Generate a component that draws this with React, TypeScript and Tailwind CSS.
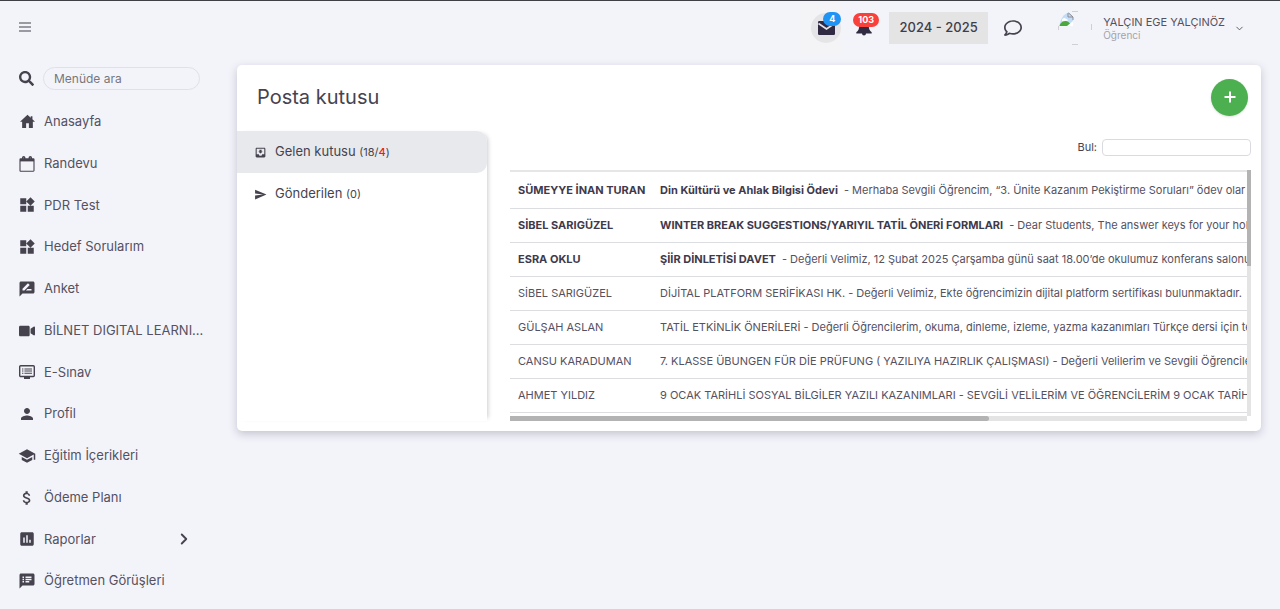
import React from "react";
import type { IconType } from "react-icons";
import {
  MdWidgets,
  MdRateReview,
  MdPerson,
  MdSchool,
  MdAttachMoney,
  MdAssessment,
  MdSpeakerNotes,
  MdSend,
  MdMoveToInbox,
} from "react-icons/md";
import { FaSearch, FaRegComment, FaVideo } from "react-icons/fa";
import { ChevronDown, ChevronRight } from "lucide-react";

type IconProps = { className?: string };

function MenuIcon({ className }: IconProps) {
  return (
    <svg viewBox="0 0 12 10" className={className} fill="currentColor" aria-hidden="true">
      <path d="M0 0h12v2H0zM0 4h12v2H0zM0 8h12v2H0z" />
    </svg>
  );
}

function PlusIcon({ className }: IconProps) {
  return (
    <svg viewBox="0 0 12 12" className={className} fill="currentColor" aria-hidden="true">
      <path d="M5 0.500h2V5h4.500v2H7v4.500H5V7H0.500V5H5z" />
    </svg>
  );
}

function HomeIcon({ className }: IconProps) {
  return (
    <svg viewBox="0 0 14 14" className={className} fill="currentColor" aria-hidden="true">
      <path d="M7 .6 0 7.200h2V13h3.700V8.600h2.600V13H12V7.200h2L11.600 4.900V2H10v1.400z" />
    </svg>
  );
}

function CalendarIcon({ className }: IconProps) {
  return (
    <svg viewBox="0 0 16 16" className={className} fill="none" stroke="currentColor" aria-hidden="true">
      <rect x="1" y="2.800" width="14" height="12.400" rx=".6" strokeWidth="1.1" />
      <path d="M1 4.200h14" strokeWidth="2.4" />
      <path d="M3.700 4V1.800a1 1 0 0 1 2 0V4M10.300 4V1.800a1 1 0 0 1 2 0V4" strokeWidth="1.5" />
    </svg>
  );
}

function ScreenListIcon({ className }: IconProps) {
  return (
    <svg viewBox="0 0 18 16" className={className} fill="currentColor" aria-hidden="true">
      <rect x="1.7" y="1.7" width="14.6" height="10.8" rx="1" fill="none" stroke="currentColor" strokeWidth="1.4" />
      <path d="M6 13h6v2H6zM4 4.400h1.400v1H4zM6.400 4.400H14v1H6.400zM4 6.600h1.400v1H4zM6.400 6.600H14v1H6.400zM4 8.800h1.400v1H4zM6.400 8.800H14v1H6.400z" />
    </svg>
  );
}

function EnvelopeIcon({ className }: IconProps) {
  return (
    <svg viewBox="0 0 17 14" className={className} aria-hidden="true">
      <rect width="17" height="14" rx="1.2" fill="currentColor" />
      <path d="m.5 2.500 8 5.500 8-5.500" fill="none" stroke="#e5e5e7" strokeWidth="1.7" />
    </svg>
  );
}

function BellIcon({ className }: IconProps) {
  return (
    <svg viewBox="0 0 16 18" className={className} fill="currentColor" aria-hidden="true">
      <path d="M8 0C4.800 0 3.300 2.600 3.300 5.500 3.300 9.500 2.500 12 .3 13.200v1.300h15.400v-1.300c-2.200-1.200-3-3.700-3-7.700C12.700 2.600 11.200 0 8 0zM6 14.500a2 2 0 0 0 4 0z" />
    </svg>
  );
}

function MissingAvatar() {
  return (
    <svg viewBox="0 0 36 34" className="h-[34px] w-9" fill="none" role="img" aria-label="Profil resmi">
      <path d="M.5 19v-4M14 .5h6M14 33.500h6M33.500 19v-6" stroke="#cfcfd4" />
      <path d="M1.500 15C2 8 6 2.500 11 1.500l4 4V15z" fill="#c3dcf7" />
      <path d="M4 8.500c1-2 3-2 4-.7 1.300 0 2 1 1.800 2L4 10z" fill="#fff" />
      <path d="M1.500 15c1-4 4-5 6.500-5 2.500.3 4 2.500 7 5z" fill="#4ba83f" />
      <path d="m9 15 6-5v5z" fill="#fff" />
      <path d="M10 2v4h5M10.500 2l4.500 4v3" stroke="#8d8d92" />
    </svg>
  );
}

type MenuItem = {
  label: string;
  icon: IconType | React.FC<IconProps>;
  iconSize?: string;
  expandable?: boolean;
};

const menu: MenuItem[] = [
  { label: "Anasayfa", icon: HomeIcon, iconSize: "size-[15px]" },
  { label: "Randevu", icon: CalendarIcon, iconSize: "size-4" },
  { label: "PDR Test", icon: MdWidgets },
  { label: "Hedef Sorularım", icon: MdWidgets },
  { label: "Anket", icon: MdRateReview },
  { label: "BİLNET DIGITAL LEARNI...", icon: FaVideo, iconSize: "size-4" },
  { label: "E-Sınav", icon: ScreenListIcon },
  { label: "Profil", icon: MdPerson },
  { label: "Eğitim İçerikleri", icon: MdSchool },
  { label: "Ödeme Planı", icon: MdAttachMoney },
  { label: "Raporlar", icon: MdAssessment, expandable: true },
  { label: "Öğretmen Görüşleri", icon: MdSpeakerNotes },
];

type Mail = { from: string; subject: string; preview: string; unread?: boolean };

const mails: Mail[] = [
  {
    from: "SÜMEYYE İNAN TURAN",
    subject: "Din Kültürü ve Ahlak Bilgisi Ödevi",
    preview: "Merhaba Sevgili Öğrencim, “3. Ünite Kazanım Pekiştirme Soruları” ödev olar",
    unread: true,
  },
  {
    from: "SİBEL SARIGÜZEL",
    subject: "WINTER BREAK SUGGESTIONS/YARIYIL TATİL ÖNERİ FORMLARI",
    preview: "Dear Students, The answer keys for your holid",
    unread: true,
  },
  {
    from: "ESRA OKLU",
    subject: "ŞİİR DİNLETİSİ DAVET",
    preview: "Değerli Velimiz, 12 Şubat 2025 Çarşamba günü saat 18.00’de okulumuz konferans salonun",
    unread: true,
  },
  {
    from: "SİBEL SARIGÜZEL",
    subject: "DİJİTAL PLATFORM SERİFİKASI HK.",
    preview: "Değerli Velimiz, Ekte öğrencimizin dijital platform sertifikası bulunmaktadır.",
  },
  {
    from: "GÜLŞAH ASLAN",
    subject: "TATİL ETKİNLİK ÖNERİLERİ",
    preview: "Değerli Öğrencilerim, okuma, dinleme, izleme, yazma kazanımları Türkçe dersi için tem",
  },
  {
    from: "CANSU KARADUMAN",
    subject: "7. KLASSE ÜBUNGEN FÜR DİE PRÜFUNG ( YAZILIYA HAZIRLIK ÇALIŞMASI)",
    preview: "Değerli Velilerim ve Sevgili Öğrenciler",
  },
  {
    from: "AHMET YILDIZ",
    subject: "9 OCAK TARİHLİ SOSYAL BİLGİLER YAZILI KAZANIMLARI",
    preview: "SEVGİLİ VELİLERİM VE ÖĞRENCİLERİM 9 OCAK TARİHİN",
  },
];

function Sidebar() {
  return (
    <aside className="flex min-h-screen w-[237px] shrink-0 flex-col pb-2">
      <div className="flex h-[52px] items-center pl-[19px]">
        <button type="button" aria-label="Menü" className="text-[#9a9aa3]">
          <MenuIcon className="h-[10px] w-3" />
        </button>
      </div>
      <div className="mt-[2px] flex h-[46px] items-center gap-[9px] pl-[19px]">
        <FaSearch className="size-[15px]" />
        <input
          type="search"
          aria-label="Menüde ara"
          placeholder="Menüde ara"
          className="h-[23px] w-[157px] rounded-full border border-[#dfe1e8] bg-transparent px-[10px] text-xs outline-none placeholder:text-[#77777c]"
        />
      </div>
      <nav className="flex flex-1 flex-col">
        {menu.map(({ label, icon: Icon, iconSize, expandable }) => (
          <a
            key={label}
            href="#"
            className="flex min-h-9 flex-1 items-center gap-2 pr-7 pl-[18px] text-[13px] whitespace-nowrap text-[#55515f]"
          >
            <span className="flex w-[18px] shrink-0 justify-center text-[#46434f]">
              <Icon className={iconSize ?? "size-[18px]"} />
            </span>
            <span className="flex-1">{label}</span>
            {expandable && <ChevronRight className="mr-4 size-[18px] text-[#46434f]" strokeWidth={2.5} />}
          </a>
        ))}
      </nav>
    </aside>
  );
}

function Header() {
  return (
    <header className="flex h-[54px] items-center justify-end pr-[35px]">
      <div className="flex h-full w-[42px] items-center justify-end bg-[#f4f4f7]">
        <button
          type="button"
          aria-label="Mesajlar, 4 yeni"
          className="relative flex size-[30px] items-center justify-center rounded-full bg-[#e5e5e7] text-[#312a43]"
        >
          <EnvelopeIcon className="h-[14px] w-[17px]" />
          <span className="absolute -top-px left-3 flex h-[14px] w-[18px] items-center justify-center rounded-full bg-[#2094f5] text-[9px] font-bold text-white">
            4
          </span>
        </button>
      </div>
      <button
        type="button"
        aria-label="Bildirimler, 103 yeni"
        className="relative ml-3 flex size-[26px] items-center justify-center text-[#312a43]"
      >
        <BellIcon className="mr-1 h-[18px] w-4" />
        <span className="absolute -top-[2px] left-0 flex h-[14px] w-[26px] items-center justify-center rounded-full bg-[#f9403a] text-[9px] font-bold text-white">
          103
        </span>
      </button>
      <button
        type="button"
        className="ml-[10px] h-8 w-[99px] bg-[#e4e4e5] text-[13px] font-medium text-[#3f3d49]"
      >
        2024 - 2025
      </button>
      <button type="button" aria-label="Sohbet" className="ml-4 text-[#46434f]">
        <FaRegComment className="size-[18px]" />
      </button>
      <button type="button" className="ml-9 flex items-center text-left">
        <MissingAvatar />
        <span className="ml-[9px] flex flex-col">
          <span className="text-[11px] leading-[13px] text-[#55515f]">YALÇIN EGE YALÇINÖZ</span>
          <span className="text-[10px] leading-3 text-[#a3a3aa]">Öğrenci</span>
        </span>
        <ChevronDown className="ml-[9px] size-[11px] text-[#55515f]" />
      </button>
    </header>
  );
}

function MailRow({ mail }: { mail: Mail }) {
  return (
    <tr className="h-[34px] border-b border-[#dcdde1] first:h-9">
      <td className={mail.unread ? "min-w-[142px] pl-2 font-bold text-[#3f3a4b]" : "min-w-[142px] pl-2"}>
        {mail.from}
      </td>
      <td className="w-full pl-2">
        <span className={mail.unread ? "mr-[6px] font-bold text-[#3f3a4b]" : "mr-[3px]"}>{mail.subject}</span>
        <span>- {mail.preview}</span>
      </td>
    </tr>
  );
}

function Mailbox() {
  return (
    <main className="mr-[19px] rounded-[5px] bg-white pb-[10px] shadow-[0_3px_8px_rgba(50,50,80,0.25)]">
      <div className="flex h-[66px] items-center justify-between pr-[13px] pb-[2px] pl-5">
        <h1 className="text-xl text-[#46434f]">Posta kutusu</h1>
        <button
          type="button"
          aria-label="Yeni mesaj"
          className="flex size-[37px] items-center justify-center rounded-full bg-[#4caf50] text-white shadow"
        >
          <PlusIcon className="size-3" />
        </button>
      </div>
      <div className="flex">
        <div className="w-[250px] shrink-0 rounded-tr-[10px] shadow-[4px_0_4px_-3px_rgba(50,50,80,0.25)]">
          <a
            href="#"
            className="flex h-[42px] items-center gap-2 rounded-r-[10px] bg-[#e8e9ed] pl-[17px] text-[13px] text-[#46434f]"
          >
            <MdMoveToInbox className="size-[13px]" />
            <span>
              Gelen kutusu{" "}
              <span className="text-[11px]">
                (18/<span className="font-medium text-[#f01818]">4</span>)
              </span>
            </span>
          </a>
          <a href="#" className="flex h-[42px] items-center gap-2 pl-[17px] text-[13px] text-[#46434f]">
            <MdSend className="size-[13px]" />
            <span>
              Gönderilen <span className="text-[11px]">(0)</span>
            </span>
          </a>
        </div>
        <div className="min-w-0 flex-1 pr-[10px] pl-[23px]">
          <div className="flex h-[39px] items-center justify-end gap-[5px] pb-[6px] text-[11px]">
            <label htmlFor="find">Bul:</label>
            <input
              id="find"
              type="text"
              className="h-[17px] w-[149px] rounded border border-[#dadbe0] bg-white px-1 text-[11px] outline-none"
            />
          </div>
          <div className="flex">
            <div className="min-w-0 flex-1 overflow-hidden border-t-2 border-[#e6e6e8] pb-[3px]">
              <table className="w-full text-[11px] whitespace-nowrap text-[#55515f]">
                <tbody>
                  {mails.map((mail, index) => (
                    <MailRow key={index} mail={mail} />
                  ))}
                </tbody>
              </table>
            </div>
            <div className="w-1 bg-[#e4e4e4]">
              <div className="h-[39%] bg-[#b3b3b3]" />
            </div>
          </div>
          <div className="mr-1 h-[5px] bg-[#e4e4e4]">
            <div className="h-full w-[65%] rounded-r-sm bg-[#b3b3b3]" />
          </div>
        </div>
      </div>
    </main>
  );
}

export default function App() {
  return (
    <div className="flex min-h-screen border-t border-[#3f3f46] bg-[#f3f4fa] font-['Inter',sans-serif] text-[#46434f]">
      <Sidebar />
      <div className="flex min-w-0 flex-1 flex-col gap-[10px]">
        <Header />
        <Mailbox />
      </div>
    </div>
  );
}
